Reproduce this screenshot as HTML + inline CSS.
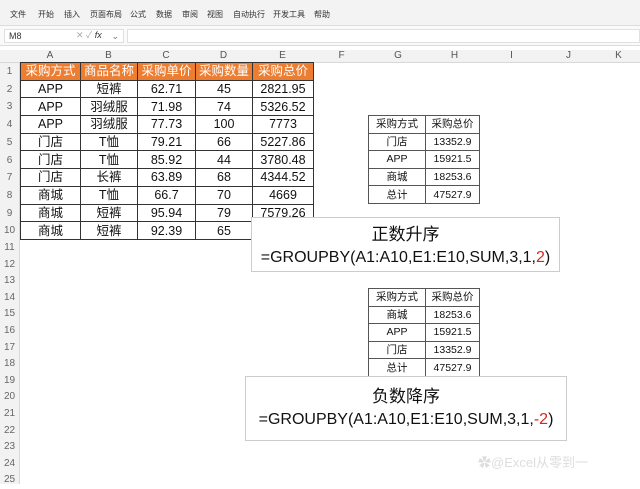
<!DOCTYPE html>
<html><head><meta charset="utf-8"><style>
*{margin:0;padding:0;box-sizing:border-box}
body{width:640px;height:484px;overflow:hidden;background:#fff;font-family:"Liberation Sans","Noto Sans CJK SC",sans-serif;position:relative}
.a{position:absolute}
.menu{top:0;left:0;width:640px;height:26px;background:#f3f3f3;border-bottom:1px solid #ddd;font-size:8px;color:#333}
.menu span{position:absolute;top:9px}
.fbar{top:26px;left:0;width:640px;height:20px;background:#fafafa;border-bottom:1px solid #ddd}
.colh{top:50px;left:0;width:640px;height:13px;background:#f2f2f2;border-bottom:1px solid #d8d8d8;font-size:10px;color:#555}
.colh span{position:absolute;top:0;text-align:center}
.rowh{left:0;width:20px;background:#f2f2f2;border-right:1px solid #d8d8d8;font-size:10px;color:#666;text-align:center}
table{border-collapse:collapse;position:absolute;table-layout:fixed}
td{border:1px solid #333;text-align:center;font-size:12.5px;color:#111;padding:0;line-height:14px;vertical-align:middle}
.m tr{height:17.7px}
.hd td{background:#ED7D31;color:#fff}
.s tr{height:17.6px}
.s td{font-size:10.5px;line-height:12px;border-color:#555}
.box{background:#fff;border:1px solid #ccc;text-align:center;color:#111}
</style></head><body>
<div class="a menu">
<span style="left:10px">文件</span><span style="left:38px">开始</span><span style="left:64px">插入</span><span style="left:90px">页面布局</span><span style="left:130px">公式</span><span style="left:156px">数据</span><span style="left:182px">审阅</span><span style="left:207px">视图</span><span style="left:233px">自动执行</span><span style="left:273px">开发工具</span><span style="left:314px">帮助</span>
</div>
<div class="a fbar">
<div class="a" style="left:4px;top:3px;width:120px;height:14px;background:#fff;border:1px solid #e0e0e0;font-size:9px;color:#333;padding-left:4px;line-height:12px">M8<span style="position:absolute;right:4px;color:#777">⌄</span></div>
<div class="a" style="left:72px;top:3px;width:52px;height:14px;font-size:9px;color:#aaa;line-height:13px;padding-left:4px">✕ ✓ <i style="color:#333">fx</i></div>
<div class="a" style="left:127px;top:3px;width:513px;height:14px;background:#fff;border:1px solid #e0e0e0"></div>
</div>
<div class="a colh">
<span style="left:20px;width:60px">A</span><span style="left:80px;width:57px">B</span><span style="left:137px;width:58px">C</span><span style="left:195px;width:57px">D</span><span style="left:252px;width:61px">E</span><span style="left:313px;width:57px">F</span><span style="left:370px;width:56px">G</span><span style="left:426px;width:57px">H</span><span style="left:483px;width:57px">I</span><span style="left:540px;width:57px">J</span><span style="left:597px;width:43px">K</span>
</div>
<div class="a rowh" style="top:63px;height:421px">
<div style="line-height:17.7px">1<br>2<br>3<br>4<br>5<br>6<br>7<br>8<br>9<br>10</div>
<div style="line-height:16.6px">11<br>12<br>13<br>14<br>15<br>16<br>17<br>18<br>19<br>20<br>21<br>22<br>23<br>24<br>25</div>
</div>
<table class="m" style="left:20px;top:62px;width:293px">
<colgroup><col style="width:60px"><col style="width:57px"><col style="width:58px"><col style="width:57px"><col style="width:61px"></colgroup>
<tr class="hd"><td>采购方式</td><td>商品名称</td><td>采购单价</td><td>采购数量</td><td>采购总价</td></tr>
<tr><td>APP</td><td>短裤</td><td>62.71</td><td>45</td><td>2821.95</td></tr>
<tr><td>APP</td><td>羽绒服</td><td>71.98</td><td>74</td><td>5326.52</td></tr>
<tr><td>APP</td><td>羽绒服</td><td>77.73</td><td>100</td><td>7773</td></tr>
<tr><td>门店</td><td>T恤</td><td>79.21</td><td>66</td><td>5227.86</td></tr>
<tr><td>门店</td><td>T恤</td><td>85.92</td><td>44</td><td>3780.48</td></tr>
<tr><td>门店</td><td>长裤</td><td>63.89</td><td>68</td><td>4344.52</td></tr>
<tr><td>商城</td><td>T恤</td><td>66.7</td><td>70</td><td>4669</td></tr>
<tr><td>商城</td><td>短裤</td><td>95.94</td><td>79</td><td>7579.26</td></tr>
<tr><td>商城</td><td>短裤</td><td>92.39</td><td>65</td><td>6005.35</td></tr>
</table>
<table class="s" style="left:368px;top:115px;width:111px">
<colgroup><col style="width:57px"><col style="width:54px"></colgroup>
<tr><td>采购方式</td><td>采购总价</td></tr>
<tr><td>门店</td><td>13352.9</td></tr>
<tr><td>APP</td><td>15921.5</td></tr>
<tr><td>商城</td><td>18253.6</td></tr>
<tr><td>总计</td><td>47527.9</td></tr>
</table>
<table class="s" style="left:368px;top:288px;width:111px">
<colgroup><col style="width:57px"><col style="width:54px"></colgroup>
<tr><td>采购方式</td><td>采购总价</td></tr>
<tr><td>商城</td><td>18253.6</td></tr>
<tr><td>APP</td><td>15921.5</td></tr>
<tr><td>门店</td><td>13352.9</td></tr>
<tr><td>总计</td><td>47527.9</td></tr>
</table>
<div class="a box" style="left:251px;top:217px;width:309px;height:55px">
<div style="font-size:17px;margin-top:6px;line-height:22px">正数升序</div>
<div style="font-size:16px;line-height:24px">=GROUPBY(A1:A10,E1:E10,SUM,3,1,<span style="color:#d22">2</span>)</div>
</div>
<div class="a box" style="left:245px;top:376px;width:322px;height:65px">
<div style="font-size:17px;margin-top:9px;line-height:22px">负数降序</div>
<div style="font-size:16px;line-height:24px">=GROUPBY(A1:A10,E1:E10,SUM,3,1,<span style="color:#d22">-2</span>)</div>
</div>
<div class="a" style="left:478px;top:452px;font-size:13px;color:#ddd">✿@Excel从零到一</div>
</body></html>
